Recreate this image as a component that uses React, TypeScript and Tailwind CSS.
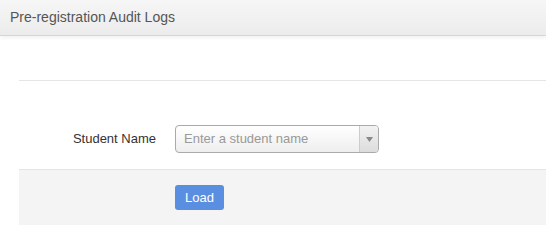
export default function App() {
  return (
    <div className="w-[546px] h-[245px] bg-white overflow-hidden" style={{ fontFamily: '"Liberation Sans", Arial, sans-serif' }}>
      <div className="h-[36px] bg-gradient-to-b from-[#f6f6f6] to-[#ececec] border-b border-[#d6d6d6] shadow-[0_2px_4px_rgba(0,0,0,0.06)] flex items-center pl-[10px]">
        <span className="text-[14px] text-[#555]">Pre-registration Audit Logs</span>
      </div>
      <div className="pl-[19px]">
        <div className="h-[44px]" />
        <div className="border-t border-[#e5e5e5]" />
        <div className="h-[44px]" />
        <div className="flex items-center h-[28px]">
          <div className="w-[137px] text-right text-[13px] text-[#333]">Student Name</div>
          <div className="ml-[19px] w-[204px] h-[28px] rounded-[4px] border border-[#aaa] bg-gradient-to-b from-white to-[#eee] flex items-stretch">
            <div className="flex-1 flex items-center pl-[8px] text-[13px] text-[#999]">Enter a student name</div>
            <div className="w-[19px] border-l border-[#ccc] bg-gradient-to-b from-[#f2f2f2] to-[#dcdcdc] rounded-r-[3px] flex items-center justify-center">
              <svg width="7" height="5" viewBox="0 0 7 5"><path d="M0 0 L7 0 L3.5 5 Z" fill="#888" /></svg>
            </div>
          </div>
        </div>
        <div className="h-[16px]" />
        <div className="bg-[#f4f4f4] border-t border-[#e5e5e5] h-[56px] flex items-start pt-[15px]">
          <button className="ml-[156px] w-[49px] h-[25px] bg-[#5a8ee0] rounded-[3px] text-white text-[13px] flex items-center justify-center">Load</button>
        </div>
      </div>
    </div>
  );
}
